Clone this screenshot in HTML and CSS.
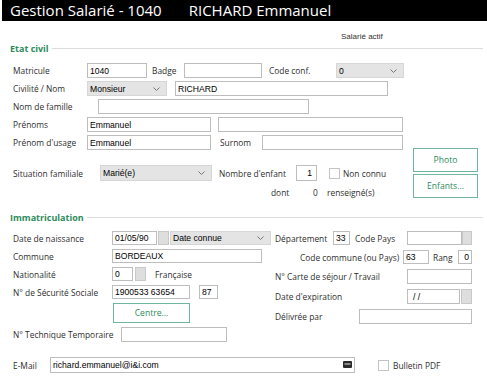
FILE: index.html
```html
<!DOCTYPE html>
<html lang="fr">
<head>
    <meta charset="UTF-8">
    <meta name="viewport" content="width=device-width, initial-scale=1.0">
    <title>Gestion Salarié</title>
    <link rel="stylesheet" href="styles.css">
</head>
<body>
    <header class="title-bar">
        <span class="title-main">Gestion Salarié - 1040</span>
        <span class="title-name">RICHARD Emmanuel</span>
    </header>

    <div class="status">Salarié actif</div>

    <div class="section-head">Etat civil</div>
    <section class="etat-civil">
        <div class="col-left">
            <div class="row">
                <span class="lbl">Matricule</span>
                <div class="field f-matricule">1040</div>
                <span class="txt t-badge">Badge</span>
                <div class="field f-badge"></div>
                <span class="txt t-conf">Code conf.</span>
                <div class="combo f-conf">0</div>
            </div>
            <div class="row">
                <span class="lbl">Civilité / Nom</span>
                <div class="combo f-civ">Monsieur</div>
                <div class="field f-nom">RICHARD</div>
            </div>
            <div class="row">
                <span class="lbl lbl-famille">Nom de famille</span>
                <div class="field f-famille"></div>
            </div>
            <div class="row">
                <span class="lbl">Prénoms</span>
                <div class="field f-prenom">Emmanuel</div>
                <div class="field f-prenom2"></div>
            </div>
            <div class="row">
                <span class="lbl">Prénom d'usage</span>
                <div class="field f-prenom">Emmanuel</div>
                <span class="txt t-surnom">Surnom</span>
                <div class="field f-surnom"></div>
            </div>
            <div class="row row-situation">
                <span class="lbl lbl-situation">Situation familiale</span>
                <div class="combo f-situation">Marié(e)</div>
                <span class="txt t-enfant">Nombre d'enfant</span>
                <div class="field f-enfant">1</div>
                <span class="check c-connu"></span>
                <span class="txt">Non connu</span>
            </div>
            <div class="row row-dont">
                <span class="txt t-dont">dont</span>
                <span class="txt t-zero">0</span>
                <span class="txt">renseigné(s)</span>
            </div>
        </div>
        <div class="col-buttons">
            <button class="btn btn-side">Photo</button>
            <button class="btn btn-side">Enfants...</button>
        </div>
    </section>

    <div class="section-head head-immat">Immatriculation</div>
    <section class="immat">
        <div class="immat-left">
            <div class="row">
                <span class="lbl lbl-wide">Date de naissance</span>
                <div class="field f-date">01/05/90</div>
                <span class="sq"></span>
                <div class="combo f-dateconnue">Date connue</div>
            </div>
            <div class="row">
                <span class="lbl lbl-wide">Commune</span>
                <div class="field f-commune">BORDEAUX</div>
            </div>
            <div class="row">
                <span class="lbl lbl-wide">Nationalité</span>
                <div class="field f-nat">0</div>
                <span class="sq sq-nat"></span>
                <span class="txt t-francaise">Française</span>
            </div>
            <div class="row">
                <span class="lbl lbl-wide">N° de Sécurité Sociale</span>
                <div class="field f-secu">1900533 63654</div>
                <div class="field f-cle">87</div>
            </div>
            <div class="row row-centre">
                <button class="btn btn-centre">Centre...</button>
            </div>
            <div class="row row-tech">
                <span class="lbl lbl-tech">N° Technique Temporaire</span>
                <div class="field f-tech"></div>
            </div>
        </div>
        <div class="immat-right">
            <div class="row">
                <span class="txt t-dep">Département</span>
                <div class="field f-dep">33</div>
                <span class="txt t-pays">Code Pays</span>
                <div class="field f-pays"></div>
                <span class="sq sq-pays"></span>
            </div>
            <div class="row">
                <span class="txt t-commune">Code commune (ou Pays)</span>
                <div class="field f-code">63</div>
                <span class="txt t-rang">Rang</span>
                <div class="field f-rang">0</div>
            </div>
            <div class="row row-carte">
                <span class="txt t-carte">N° Carte de séjour / Travail</span>
                <div class="field f-carte"></div>
            </div>
            <div class="row row-exp">
                <span class="txt t-carte">Date d'expiration</span>
                <div class="field f-exp">/ /</div>
                <span class="sq sq-exp"></span>
            </div>
            <div class="row row-deliv">
                <span class="txt t-deliv">Délivrée par</span>
                <div class="field f-deliv"></div>
            </div>
        </div>
    </section>

    <div class="row row-mail">
        <span class="lbl lbl-mail">E-Mail</span>
        <div class="field f-mail">
            richard.emmanuel@i&amp;i.com
            <svg class="mail-icon" width="9" height="7" viewBox="0 0 9 7"><rect x="0" y="0" width="9" height="7" rx="1" fill="#2b2b2b"/><rect x="1.5" y="2" width="6" height="2" fill="#8a8a8a"/></svg>
        </div>
        <span class="check c-pdf"></span>
        <span class="txt">Bulletin PDF</span>
    </div>
</body>
</html>
```

FILE: styles.css
```css
body {
    margin: 0;
    background: #fff;
    font-family: 'Open Sans', 'Noto Sans', sans-serif;
    font-size: 8.4px;
    color: #2e2e2e;
    width: 487px;
    height: 389px;
    overflow: hidden;
}
.title-bar {
    background: #000;
    color: #fff;
    height: 21px;
    margin-left: 2px;
    display: flex;
    align-items: center;
    padding-left: 8px;
    font-size: 15px;
    line-height: 1;
}
.title-name {
    margin-left: 27px;
}
.status {
    margin-top: 10px;
    height: 11px;
    line-height: 11px;
    padding-left: 341px;
    font-family: 'Liberation Sans', Arial, sans-serif;
    font-size: 8px;
    color: #333;
}
.section-head {
    display: flex;
    align-items: center;
    height: 12px;
    padding: 0 4px 0 10px;
    color: #2e8b5c;
    font-size: 9px;
    font-weight: bold;
}
.section-head::after {
    content: '';
    flex: 1;
    height: 1px;
    background: #dcdcdc;
    margin-left: 3px;
}
.head-immat {
    margin-top: 12px;
}

.row {
    display: flex;
    align-items: center;
    height: 15px;
    white-space: nowrap;
}
.lbl {
    width: 74px;
    flex-shrink: 0;
}
.txt {
    flex-shrink: 0;
    box-sizing: border-box;
}
.field, .combo {
    box-sizing: border-box;
    height: 100%;
    flex-shrink: 0;
    border: 1px solid #bdbdbd;
    background: #fff;
    font-family: 'Liberation Sans', Arial, sans-serif;
    font-size: 8.6px;
    color: #000;
    padding-left: 2px;
    display: flex;
    align-items: center;
    position: relative;
}
.combo {
    background: #e4e4e4 url("data:image/svg+xml,%3Csvg xmlns='http://www.w3.org/2000/svg' width='7' height='4'%3E%3Cpath d='M0.5 0.5 L3.5 3.5 L6.5 0.5' fill='none' stroke='%23777' stroke-width='1'/%3E%3C/svg%3E") no-repeat right 6px center;
    border-color: #d6d6d6;
}
.sq {
    box-sizing: border-box;
    width: 11px;
    height: 100%;
    flex-shrink: 0;
    background: #dedede;
    border: 1px solid #c8c8c8;
}
.check {
    box-sizing: border-box;
    width: 11px;
    height: 11px;
    flex-shrink: 0;
    border: 1px solid #c4c4c4;
    background: #fff;
}
.btn {
    box-sizing: border-box;
    border: 1px solid #6fb49c;
    background: #fff;
    color: #2e8b5c;
    font-family: 'Open Sans', 'Noto Sans', sans-serif;
    font-size: 8.6px;
    padding: 0;
}

/* Etat civil */
.etat-civil {
    display: flex;
    margin-top: 9px;
    padding-left: 13px;
}
.col-left {
    display: flex;
    flex-direction: column;
    gap: 3px;
    width: 390px;
}
.col-buttons {
    display: flex;
    flex-direction: column;
    gap: 2px;
    margin: 85px 0 0 10px;
}
.btn-side {
    width: 65px;
    height: 24px;
}
.f-matricule { width: 60px; }
.t-badge { width: 37px; padding-left: 5px; }
.f-badge { width: 78px; }
.t-conf { width: 74px; padding-left: 7px; }
.f-conf { width: 68px; }
.f-civ { width: 80px; }
.f-nom { width: 213px; margin-left: 8px; }
.lbl-famille { width: 85px; }
.f-famille { width: 211px; }
.f-prenom { width: 124px; }
.f-prenom2 { width: 185px; margin-left: 7px; }
.t-surnom { width: 51px; padding-left: 9px; }
.f-surnom { width: 141px; }
.row-situation {
    height: 16px;
    margin-top: 12px;
}
.lbl-situation { width: 87px; }
.f-situation { width: 112px; }
.t-enfant { width: 84px; padding-left: 7px; }
.f-enfant {
    width: 21px;
    justify-content: flex-end;
    padding: 0 4px 0 0;
}
.c-connu { margin: 0 3px 0 12px; }
.row-dont {
    height: 14px;
    margin-top: 1px;
}
.t-dont { width: 42px; margin-left: 258px; }
.t-zero { width: 14px; }

/* Immatriculation */
.immat {
    display: flex;
    margin-top: 8px;
    padding-left: 13px;
}
.immat-left {
    display: flex;
    flex-direction: column;
    gap: 4px;
    width: 262px;
}
.immat-left .row,
.immat-right .row {
    height: 14px;
}
.lbl-wide { width: 99px; }
.f-date { width: 45px; }
.sq { margin-left: 1px; }
.f-dateconnue { width: 101px; margin-left: 1px; }
.f-commune { width: 150px; }
.f-nat { width: 21px; }
.sq-nat { margin-left: 2px; }
.t-francaise { margin-left: 9px; }
.f-secu { width: 78px; }
.f-cle { width: 19px; margin-left: 9px; }
.immat-left .row-centre { height: 20px; }
.btn-centre {
    width: 77px;
    height: 20px;
    margin-left: 100px;
}
.immat-left .row-tech { height: 15px; }
.lbl-tech { width: 108px; }
.f-tech { width: 106px; }

.immat-right {
    display: flex;
    flex-direction: column;
}
.t-dep { width: 58px; }
.f-dep { width: 17px; }
.t-pays { width: 57px; padding-left: 5px; }
.f-pays { width: 55px; }
.sq-pays { margin-left: 0; width: 10px; }
.immat-right .row + .row { margin-top: 5px; }
.t-commune { width: 128px; padding-left: 25px; }
.f-code { width: 26px; }
.t-rang { width: 29px; padding-left: 4px; }
.f-rang { width: 14px; justify-content: flex-end; padding: 0 2px 0 0; }
.immat-right .row-carte { margin-top: 16px; height: 15px; }
.immat-right .row-exp { margin-top: 3px; height: 15px; }
.immat-right .row-deliv { margin-top: 4px; height: 15px; }
.t-carte { width: 132px; }
.f-carte { width: 65px; }
.f-exp { width: 53px; padding-left: 5px; }
.t-deliv { width: 84px; }
.f-deliv { width: 113px; }

/* E-mail */
.row-mail {
    height: 16px;
    margin-top: 15px;
    padding-left: 13px;
}
.lbl-mail { width: 37px; }
.f-mail { width: 305px; }
.mail-icon {
    position: absolute;
    right: 2px;
    top: 3px;
}
.c-pdf { margin: 0 4px 0 23px; }
```
